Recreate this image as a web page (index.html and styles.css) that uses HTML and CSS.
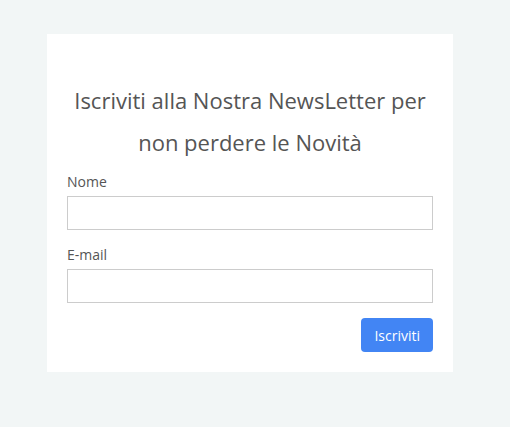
FILE: index.html
```html
<!DOCTYPE html>
<html lang="it">
<head>
  <meta charset="UTF-8" />
  <meta name="viewport" content="width=device-width, initial-scale=1.0"/>
  <title>Newsletter</title>
  <link rel="stylesheet" href="styles.css">
</head>
<body>
  <div class="newsletter">
    <h2>Iscriviti alla Nostra NewsLetter per non perdere le Novità</h2>
    <form class="form">
      <div class="field">
        <label for="nome">Nome</label>
        <input type="text" id="nome">
      </div>
      <div class="field">
        <label for="email">E-mail</label>
        <input type="email" id="email">
      </div>
      <div class="actions">
        <button type="button">Iscriviti</button>
      </div>
    </form>
  </div>
</body>
</html>
```
FILE: styles.css
```css
body {
  margin: 0;
  font-family: 'Open Sans', 'Segoe UI', sans-serif;
  background: #f2f6f6;
  color: #555;
}

.newsletter {
  background: #fff;
  width: 406px;
  box-sizing: border-box;
  margin: 34px 0 0 47px;
  padding: 45px 20px 20px;
}

.newsletter h2 {
  margin: 0 0 9px;
  font-size: 22px;
  font-weight: 400;
  line-height: 42px;
  text-align: center;
  color: #555;
}

.field {
  margin-bottom: 15px;
}

.field label {
  display: block;
  font-size: 14px;
  line-height: 20px;
  margin-bottom: 4px;
  color: #555;
}

.field input {
  display: block;
  width: 100%;
  height: 34px;
  box-sizing: border-box;
  border: 1px solid #ccc;
  border-radius: 0;
  padding: 6px 10px;
  font-family: inherit;
  font-size: 14px;
  outline: none;
}

.actions {
  display: flex;
  justify-content: flex-end;
}

.actions button {
  height: 34px;
  padding: 0 13px;
  border: none;
  border-radius: 4px;
  background: #4285f4;
  color: #fff;
  font-family: inherit;
  font-size: 14px;
  cursor: pointer;
}
```
